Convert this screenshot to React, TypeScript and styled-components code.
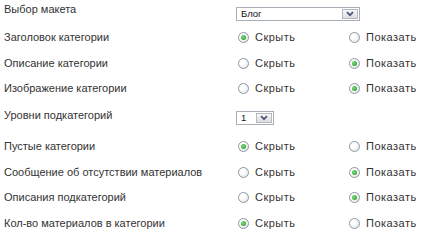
import React from "react";
import styled, { createGlobalStyle } from "styled-components";

const Global = createGlobalStyle`
  html, body { margin: 0; padding: 0; background: #ffffff; }
  body { font-family: "Liberation Sans", Arial, sans-serif; }
`;

const Page = styled.div`
  display: flex;
  flex-direction: column;
  padding-left: 4px;
`;

const Row = styled.div<{ $h: number; $select?: boolean }>`
  display: flex;
  align-items: ${(p) => (p.$select ? "flex-start" : "center")};
  height: ${(p) => p.$h}px;
`;

const Label = styled.div<{ $top?: number }>`
  width: 232px;
  flex: none;
  font-size: 11px;
  line-height: 13px;
  color: #333333;
  padding-top: ${(p) => p.$top ?? 0}px;
  white-space: nowrap;
`;

const Options = styled.div`
  display: flex;
  align-items: center;
`;

const Option = styled.label<{ $last?: boolean }>`
  display: flex;
  align-items: center;
  width: ${(p) => (p.$last ? "auto" : "111px")};
  font-size: 11px;
  letter-spacing: 0.5px;
  line-height: 13px;
  color: #333333;
  white-space: nowrap;
`;

const Circle = styled.span<{ $checked: boolean }>`
  box-sizing: border-box;
  width: 11px;
  height: 11px;
  margin-left: 2px;
  margin-right: 6px;
  border-radius: 50%;
  border: 1px solid #8d98a3;
  background: radial-gradient(circle at 35% 35%, #ffffff 30%, #dcdcdc 100%);
  display: flex;
  align-items: center;
  justify-content: center;
  &::after {
    content: "";
    width: 5px;
    height: 5px;
    border-radius: 50%;
    background: ${(p) =>
      p.$checked
        ? "radial-gradient(circle at 40% 40%, #7be07b 0%, #2f9e2f 80%)"
        : "transparent"};
  }
`;

const SelectBox = styled.div<{ $w: number; $top: number }>`
  box-sizing: border-box;
  width: ${(p) => p.$w}px;
  height: 14px;
  margin-top: ${(p) => p.$top}px;
  border: 1px solid #a7aeb5;
  background: #ffffff;
  display: flex;
  align-items: center;
  justify-content: space-between;
  padding: 0 1px 0 4px;
`;

const SelectText = styled.span`
  font-size: 9.5px;
  line-height: 10px;
  color: #111111;
`;

const SelectButton = styled.span`
  box-sizing: border-box;
  width: 16px;
  height: 10px;
  border: 1px solid #b4b9c0;
  background: linear-gradient(#f7f7f7, #dedede);
  display: flex;
  align-items: center;
  justify-content: center;
`;

const Chevron = () => (
  <svg width="8" height="6" viewBox="0 0 8 6">
    <path d="M1 1.2 L4 4.2 L7 1.2" fill="none" stroke="#4b5878" strokeWidth="1.8" />
  </svg>
);

const Select = ({ value, w, top }: { value: string; w: number; top: number }) => (
  <SelectBox $w={w} $top={top}>
    <SelectText>{value}</SelectText>
    <SelectButton>
      <Chevron />
    </SelectButton>
  </SelectBox>
);

const RadioRow = ({ label, hide }: { label: string; hide: boolean }) => (
  <Row $h={25.5}>
    <Label>{label}</Label>
    <Options>
      <Option>
        <Circle $checked={hide} />
        Скрыть
      </Option>
      <Option $last>
        <Circle $checked={!hide} />
        Показать
      </Option>
    </Options>
  </Row>
);

export default function App() {
  return (
    <>
      <Global />
      <Page>
        <Row $h={25} $select>
          <Label $top={3}>Выбор макета</Label>
          <Select value="Блог" w={124} top={7} />
        </Row>
        <RadioRow label="Заголовок категории" hide={true} />
        <RadioRow label="Описание категории" hide={false} />
        <RadioRow label="Изображение категории" hide={false} />
        <Row $h={32.5} $select>
          <Label $top={7}>Уровни подкатегорий</Label>
          <Select value="1" w={38} top={9} />
        </Row>
        <RadioRow label="Пустые категории" hide={true} />
        <RadioRow label="Сообщение об отсутствии материалов" hide={false} />
        <RadioRow label="Описания подкатегорий" hide={false} />
        <RadioRow label="Кол-во материалов в категории" hide={true} />
      </Page>
    </>
  );
}
